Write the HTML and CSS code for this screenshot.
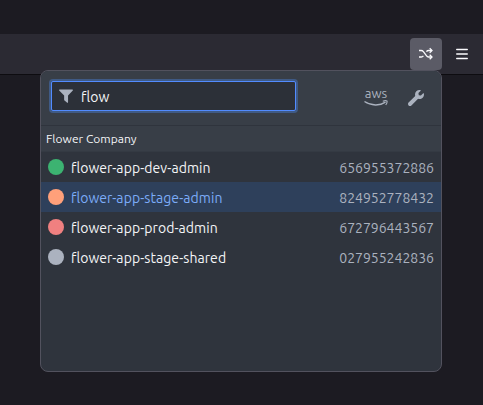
FILE: index.html
```html
<!DOCTYPE html>
<html lang="en">
<head>
<meta charset="utf-8">
<title>Roles</title>
<link rel="stylesheet" href="styles.css">
</head>
<body>
<div class="tabs"></div>
<div class="toolbar">
  <div class="tool active">
    <svg width="16" height="16" viewBox="0 0 16 16" fill="none" stroke="#fbfbfe" stroke-width="1.300"><path d="M1 4.500h2.200c1 0 1.600.4 2.200 1.200l3 4c.6.900 1.200 1.300 2.200 1.300h3M1 11h2.200c1 0 1.600-.4 2.200-1.200M8.400 5.700C9 4.900 9.600 4.500 10.600 4.500h3"/><path d="M11.700 2.200L14 4.500l-2.300 2.300M11.700 8.700L14 11l-2.300 2.300"/></svg>
  </div>
  <div class="tool">
    <svg width="16" height="16" viewBox="0 0 16 16" fill="none" stroke="#fbfbfe" stroke-width="1.300" stroke-linecap="round"><path d="M2.700 3.500h10.600M2.700 8h10.600M2.700 12.500h10.600"/></svg>
  </div>
</div>
<div class="popup">
  <div class="head">
    <div class="search">
      <svg width="14" height="14" viewBox="0 0 15 15" fill="#abb2bf"><path d="M.6.500h13.800c.5 0 .7.500.4 1L9.700 7v7.200c0 .6-.5.700-.9.400l-2.900-2.200c-.3-.2-.4-.5-.4-.8V7L.2 1.500C-.1 1 .1.500.6.500z"/></svg>
      <span>flow</span>
    </div>
    <div class="actions">
      <div class="aws">
        <span>aws</span>
        <svg width="24" height="8" viewBox="0 0 24 8" fill="none" stroke="#abb2bf"><path stroke-width="1.400" d="M.5 1.500c6.500 4.500 15.500 4.500 21 .7"/><path stroke-width="1.100" d="M18.800 1.200c1.700-.6 3.300-.7 4.200-.2.300 1.200-.2 2.700-1.300 4"/></svg>
      </div>
      <svg width="16" height="16" viewBox="0 0 512 512" fill="#abb2bf"><path d="M507.700 109.100c-2.200-9-13.500-12.100-20.100-5.500l-74.400 74.400-67.900-11.300L334 98.900l74.400-74.400c6.600-6.600 3.400-17.900-5.700-20.200-47.400-11.700-99.600.9-136.600 37.900-39.600 39.600-50.500 97.100-34.100 147.200L18.700 402.800c-25 25-25 65.500 0 90.500s65.500 25 90.500 0l213.200-213.200c50.100 16.700 107.500 5.700 147.400-34.200 37.100-37.100 49.700-89.300 37.900-136.800z"/></svg>
    </div>
  </div>
  <div class="group">Flower Company</div>
  <div class="row"><i class="dot green"></i><span class="name">flower-app-dev-admin</span><span class="id">656955372886</span></div>
  <div class="row selected"><i class="dot orange"></i><span class="name">flower-app-stage-admin</span><span class="id">824952778432</span></div>
  <div class="row"><i class="dot red"></i><span class="name">flower-app-prod-admin</span><span class="id">672796443567</span></div>
  <div class="row"><i class="dot gray"></i><span class="name">flower-app-stage-shared</span><span class="id">027955242836</span></div>
</div>
</body>
</html>
```
FILE: styles.css
```css
* { box-sizing: border-box; }
body {
  margin: 0;
  height: 405px;
  overflow: hidden;
  background: #1c1b22;
  font: 14px "Ubuntu", "Noto Sans", sans-serif;
  color: #f4f5f7;
}
svg { display: block; flex: none; }
.tabs { height: 34px; }
.toolbar {
  display: flex;
  justify-content: flex-end;
  align-items: center;
  gap: 4px;
  height: 41px;
  padding: 0 5px 1px 0;
  background: #2b2a33;
  border-bottom: 1px solid #0d0c10;
}
.tool {
  display: flex;
  align-items: center;
  justify-content: center;
  width: 32px;
  height: 32px;
  border-radius: 4px;
}
.active { background: #5b5b66; }
.popup {
  position: absolute;
  left: 40px;
  top: 70px;
  width: 402px;
  height: 302px;
  background: #2f343d;
  border: 1px solid #52525e;
  border-radius: 8px;
  overflow: hidden;
}
.head {
  display: flex;
  justify-content: space-between;
  height: 55px;
  padding: 10px 17px 0 10px;
  background: #383e47;
  border-bottom: 1px solid #2f343d;
}
.search {
  display: flex;
  align-items: center;
  gap: 8px;
  width: 245px;
  height: 30px;
  padding-left: 7px;
  background: #2c3038;
  border: 1px solid #528bff;
  border-radius: 2px;
  box-shadow: 0 0 0 2px #3f5a85;
}
.search span { padding-top: 2px; letter-spacing: .1px; }
.actions { display: flex; gap: 20px; padding-top: 9px; }
.aws { width: 24px; margin-top: -3px; color: #abb2bf; }
.aws span {
  display: block;
  height: 13px;
  font-size: 13px;
  line-height: 13px;
  text-align: center;
}
.group {
  height: 26px;
  padding-left: 5px;
  background: #383e47;
  border-bottom: 1px solid #343a43;
  font-size: 12px;
  line-height: 25px;
  letter-spacing: .03px;
}
.row {
  display: flex;
  align-items: center;
  height: 30px;
  padding: 0 7px;
}
.selected { background: #2e405b; }
.selected .name { color: #7cacf8; }
.dot { width: 16px; height: 16px; border-radius: 50%; margin: -1px 7px 0 0; }
.green { background: #3cb371; }
.orange { background: #ffa07a; }
.red { background: #f08080; }
.gray { background: #abb2bf; }
.name { flex: 1; padding-top: 2px; letter-spacing: .07px; }
.id { padding-top: 2px; color: #abb2bf; }
```
